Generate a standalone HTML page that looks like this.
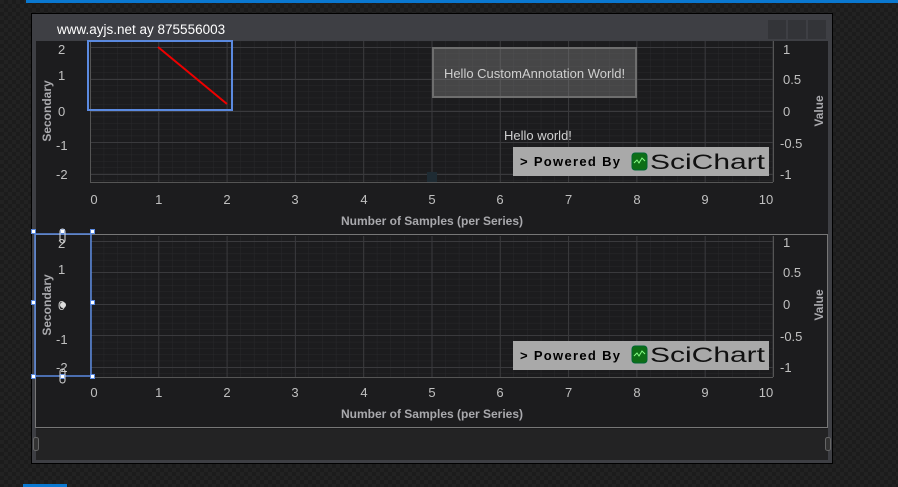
<!DOCTYPE html>
<html><head><meta charset="utf-8"><style>
html,body{margin:0;padding:0;width:898px;height:487px;overflow:hidden;background:#1d1d1d}
svg{display:block}
text{font-family:"Liberation Sans",sans-serif}
</style></head><body>
<svg width="898" height="487" viewBox="0 0 898 487" xmlns="http://www.w3.org/2000/svg">
<defs>
<pattern id="chk" width="8" height="8" patternUnits="userSpaceOnUse"><rect width="8" height="8" fill="#1c1c1c"/><rect width="4" height="4" fill="#222"/><rect x="4" y="4" width="4" height="4" fill="#222"/></pattern>
<pattern id="mg1" x="90" y="47" width="13.66" height="6.33" patternUnits="userSpaceOnUse"><path d="M0 0V6.33M0 0H13.66" stroke="#29292b" stroke-width="1" fill="none"/></pattern>
<pattern id="mg2" x="90" y="241" width="13.66" height="6.3" patternUnits="userSpaceOnUse"><path d="M0 0V6.3M0 0H13.66" stroke="#29292b" stroke-width="1" fill="none"/></pattern>
</defs>
<rect width="898" height="487" fill="url(#chk)"/>
<rect x="26" y="0" width="872" height="3" fill="#0a78d0"/>
<rect x="23" y="484" width="44" height="3" fill="#0a78d0"/>
<rect x="31.5" y="13.5" width="801" height="450" fill="#3e3f44" stroke="#000"/>
<text x="57" y="34" font-size="13.5" fill="#fff">www.ayjs.net ay 875556003</text>
<rect x="768" y="20" width="18" height="19" fill="#333438"/>
<rect x="788" y="20" width="18" height="19" fill="#333438"/>
<rect x="808" y="20" width="18" height="19" fill="#333438"/>
<rect x="36" y="41" width="792" height="389" fill="#1c1c1e"/>
<!-- TOP CHART -->
<rect x="90" y="41" width="683" height="141" fill="url(#mg1)"/>
<g stroke="#3a3a3d" stroke-width="1">
<path d="M90.5 41V182M158.8 41V182M227.1 41V182M295.4 41V182M363.7 41V182M432 41V182M500.3 41V182M568.6 41V182M636.9 41V182M705.2 41V182M773 41V182"/>
<path d="M90 47.5H773M90 79.5H773M90 111.5H773M90 142.5H773M90 174.5H773"/>
</g>
<path d="M90.5 41V182M90 182.5H773M773.5 41V182" stroke="#555" fill="none"/>
<rect x="88" y="41" width="144" height="69" fill="none" stroke="#5b8ae0" stroke-width="2"/>
<line x1="158" y1="47" x2="227" y2="104" stroke="#e00" stroke-width="2"/>
<rect x="433" y="48" width="203" height="49" fill="rgba(128,128,128,0.42)" stroke="#6e6e6e" stroke-width="2"/>
<text x="534.5" y="78" font-size="13" fill="#cfcfcf" text-anchor="middle">Hello CustomAnnotation World!</text>
<text x="504" y="140" font-size="13" fill="#d0d0d0">Hello world!</text>
<rect x="427" y="172" width="10" height="10" fill="#1e2b33"/>
<rect x="513" y="147" width="256" height="29" fill="#a9a9a9"/>
<text x="520" y="166" font-size="13" font-weight="bold" fill="#000" textLength="100">&gt; Powered By</text>
<rect x="632" y="153" width="15" height="17" rx="3" fill="#0d6e16" stroke="#063"/>
<path d="M634 163l3-3 2 3 3-5 3 3" stroke="#8f8" fill="none" stroke-width="1"/>
<text x="650" y="169" font-size="21" fill="#111" textLength="115" lengthAdjust="spacingAndGlyphs">SciChart</text>
<g font-size="13" fill="#c0c0c0">
<text x="58" y="54">2</text><text x="58" y="80">1</text><text x="58" y="116">0</text><text x="56" y="150">-1</text><text x="56" y="179">-2</text>
<text x="783" y="54">1</text><text x="783" y="84">0.5</text><text x="783" y="116">0</text><text x="780" y="148">-0.5</text><text x="780" y="179">-1</text>
</g>
<g font-size="13" fill="#c0c0c0" text-anchor="middle">
<text x="94" y="204">0</text><text x="158.8" y="204">1</text><text x="227" y="204">2</text><text x="295" y="204">3</text><text x="364" y="204">4</text><text x="432" y="204">5</text><text x="500" y="204">6</text><text x="568.6" y="204">7</text><text x="637" y="204">8</text><text x="705" y="204">9</text><text x="766" y="204">10</text>
</g>
<text x="432" y="225" font-size="12" font-weight="bold" fill="#a9a9ad" text-anchor="middle">Number of Samples (per Series)</text>
<text transform="translate(51,111) rotate(-90)" font-size="12" font-weight="bold" fill="#a9a9ad" text-anchor="middle">Secondary</text>
<text transform="translate(823,111) rotate(-90)" font-size="12" font-weight="bold" fill="#a9a9ad" text-anchor="middle">Value</text>
<!-- BOTTOM CHART -->
<rect x="35.5" y="234.5" width="792" height="193" fill="none" stroke="#777"/>
<rect x="90" y="236" width="683" height="141" fill="url(#mg2)"/>
<g stroke="#3a3a3d" stroke-width="1">
<path d="M90.5 236V377M158.8 236V377M227.1 236V377M295.4 236V377M363.7 236V377M432 236V377M500.3 236V377M568.6 236V377M636.9 236V377M705.2 236V377M773 236V377"/>
<path d="M90 241.5H773M90 272.5H773M90 304.5H773M90 335.5H773M90 367.5H773"/>
</g>
<path d="M90 377.5H773M773.5 236V377" stroke="#555" fill="none"/>
<rect x="513" y="341" width="256" height="29" fill="#a9a9a9"/>
<text x="520" y="360" font-size="13" font-weight="bold" fill="#000" textLength="100">&gt; Powered By</text>
<rect x="632" y="346" width="15" height="17" rx="3" fill="#0d6e16" stroke="#063"/>
<path d="M634 356l3-3 2 3 3-5 3 3" stroke="#8f8" fill="none" stroke-width="1"/>
<text x="650" y="362" font-size="21" fill="#111" textLength="115" lengthAdjust="spacingAndGlyphs">SciChart</text>
<g font-size="13" fill="#c0c0c0">
<text x="58" y="248">2</text><text x="58" y="274">1</text><text x="58" y="310">0</text><text x="56" y="344">-1</text><text x="56" y="372">-2</text>
<text x="783" y="247">1</text><text x="783" y="277">0.5</text><text x="783" y="309">0</text><text x="780" y="341">-0.5</text><text x="780" y="372">-1</text>
</g>
<g font-size="13" fill="#c0c0c0" text-anchor="middle">
<text x="94" y="397">0</text><text x="158.8" y="397">1</text><text x="227" y="397">2</text><text x="295" y="397">3</text><text x="364" y="397">4</text><text x="432" y="397">5</text><text x="500" y="397">6</text><text x="568.6" y="397">7</text><text x="637" y="397">8</text><text x="705" y="397">9</text><text x="766" y="397">10</text>
</g>
<text x="432" y="418" font-size="12" font-weight="bold" fill="#a9a9ad" text-anchor="middle">Number of Samples (per Series)</text>
<text transform="translate(51,305) rotate(-90)" font-size="12" font-weight="bold" fill="#a9a9ad" text-anchor="middle">Secondary</text>
<text transform="translate(823,305) rotate(-90)" font-size="12" font-weight="bold" fill="#a9a9ad" text-anchor="middle">Value</text>
<rect x="35" y="234" width="56" height="142" fill="none" stroke="#5b8ae0" stroke-width="1.5"/>
<g fill="#fff" stroke="#5b8ae0" stroke-width="1">
<rect x="31.5" y="229.5" width="4" height="4"/><rect x="90.5" y="229.5" width="4" height="4"/><rect x="60.5" y="229.5" width="4" height="4"/>
<rect x="31.5" y="300.5" width="4" height="4"/><rect x="90.5" y="300.5" width="4" height="4"/>
<rect x="31.5" y="374.5" width="4" height="4"/><rect x="90.5" y="374.5" width="4" height="4"/><rect x="60.5" y="374.5" width="4" height="4"/>
</g>
<rect x="60" y="229" width="5" height="14" rx="2.5" fill="none" stroke="#ddd"/>
<rect x="60" y="369" width="5" height="14" rx="2.5" fill="none" stroke="#ddd"/>
<circle cx="63" cy="305" r="3" fill="#ddd"/>
<rect x="36" y="429" width="792" height="31" fill="#232324"/>
<rect x="33.5" y="437.5" width="5" height="13" rx="2" fill="#333" stroke="#666"/>
<rect x="825.5" y="437.5" width="5" height="13" rx="2" fill="#333" stroke="#666"/>
</svg>
</body></html>
